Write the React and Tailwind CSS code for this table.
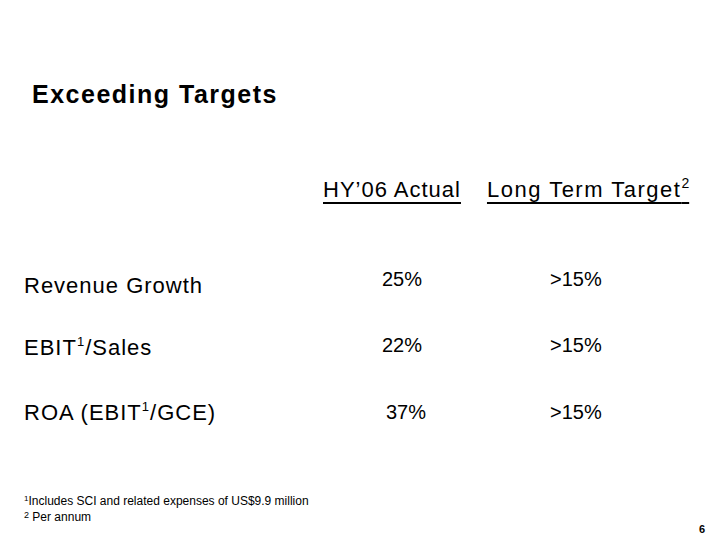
import React from 'react';

// Slide 6: Exceeding Targets
const rows = [
  { label: <>Revenue Growth</>, actual: '25%', target: '>15%', labelTop: 'mt-[6px]', gap: 'mt-[68px]', shift: '' },
  { label: <>EBIT<sup className="text-[13px] -top-[9px]">1</sup>/Sales</>, actual: '22%', target: '>15%', labelTop: 'mt-[2px]', gap: 'mt-[38px]', shift: '' },
  { label: <>ROA (EBIT<sup className="text-[13px] -top-[9px]">1</sup>/GCE)</>, actual: '37%', target: '>15%', labelTop: 'mt-0', gap: 'mt-[43px]', shift: 'ml-[4px]' },
];

export default function App() {
  return (
    <div className="w-[720px] h-[540px] bg-white text-black overflow-hidden" style={{ fontFamily: '"Liberation Sans", Arial, sans-serif' }}>
      <h1 className="pt-[82px] pl-[32px] text-[25px] leading-[25px] font-bold tracking-[1.5px]">Exceeding Targets</h1>

      <div className="mt-[72px] flex text-[22px] leading-[22px] tracking-[1px]">
        <span className="ml-[323px] underline decoration-2 underline-offset-[5px]">HY’06 Actual</span>
        <span className="ml-[26px] underline decoration-2 underline-offset-[5px] tracking-[1.5px]">
          Long Term Target<sup className="text-[14px] -top-[9px] tracking-normal">2</sup>
        </span>
      </div>

      {rows.map((r, i) => (
        <div key={i} className={`${r.gap} grid grid-cols-[358px_168px_auto] pl-[24px] items-start`}>
          <div className={`${r.labelTop} text-[22px] leading-[22px] tracking-[1px]`}>{r.label}</div>
          <div className={`${r.shift} text-[20px] leading-[20px]`}>{r.actual}</div>
          <div className="text-[20px] leading-[20px]">{r.target}</div>
        </div>
      ))}

      <div className="mt-[69px] flex items-start justify-between pl-[24px] pr-[15px]">
        <div className="text-[12px] leading-[16px]">
          <p><sup className="text-[8px] -top-[4px]">1</sup>Includes SCI and related expenses of US$9.9 million</p>
          <p><sup className="text-[9px] -top-[3px]">2</sup> Per annum</p>
        </div>
        <div className="mt-[31px] text-[11px] leading-[11px] font-bold">6</div>
      </div>
    </div>
  );
}
